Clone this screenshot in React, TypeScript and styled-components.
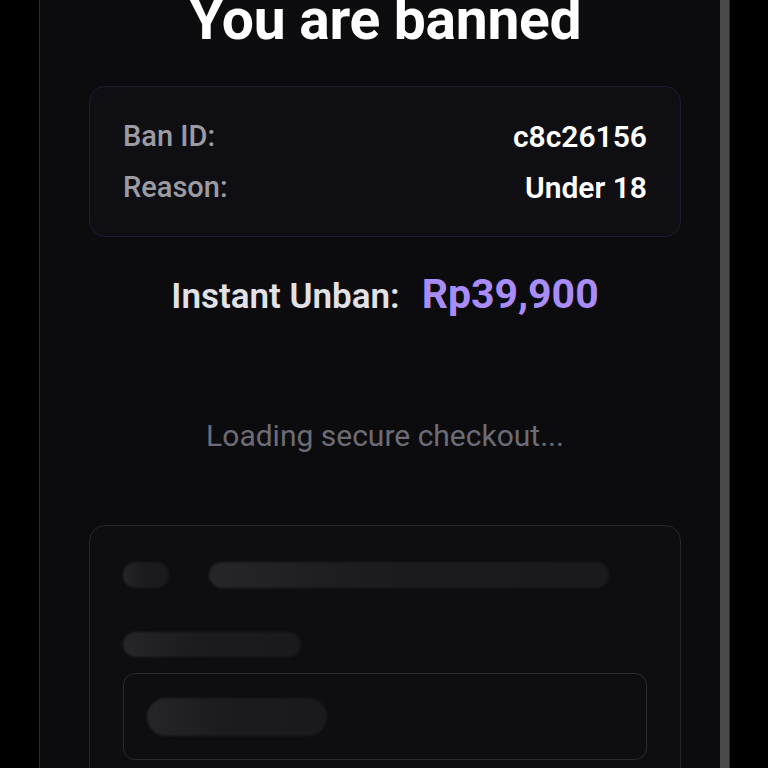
import React from "react";
import styled, { createGlobalStyle } from "styled-components";

const Global = createGlobalStyle`
  html, body { margin: 0; padding: 0; background: #000; }
  body { font-family: Roboto, "Liberation Sans", sans-serif; }
  * { box-sizing: border-box; }
`;

const Page = styled.div`
  width: 768px;
  height: 768px;
  overflow: hidden;
  background: #000;
  padding: 0 38px 0 39px;
`;

const Card = styled.div`
  margin-top: -40px;
  height: 900px;
  display: flex;
  background: #0c0c0f;
  border-left: 1px solid #2a2552;
  border-right: 1px solid #2a2552;
`;

const Content = styled.div`
  flex: 1;
  display: flex;
  flex-direction: column;
  padding: 34px 39px 0 49px;
`;

const ScrollTrack = styled.div`
  width: 9px;
  background: #4a4a4d;
`;

const Title = styled.h1`
  margin: 0;
  font-size: 57px;
  line-height: 52px;
  font-weight: 700;
  color: #fff;
  text-align: center;
  letter-spacing: -0.3px;
`;

const InfoBox = styled.div`
  margin-top: 40px;
  border: 1px solid #1e1b33;
  border-radius: 16px;
  background: #0f0f13;
  padding: 29px 33px;
  display: flex;
  flex-direction: column;
  gap: 11px;
`;

const InfoRow = styled.div`
  display: flex;
  justify-content: space-between;
  align-items: center;
  height: 40px;
`;

const Label = styled.span`
  color: #9b9ba4;
  font-size: 29px;
  font-weight: 500;
`;

const Value = styled.span`
  color: #fff;
  font-size: 30px;
  font-weight: 600;
`;

const PriceLine = styled.div`
  margin-top: 35px;
  display: flex;
  justify-content: center;
  align-items: baseline;
  gap: 22px;
  line-height: 44px;
`;

const PriceLabel = styled.span`
  font-size: 35px;
  font-weight: 600;
  color: #e2e2e6;
`;

const Price = styled.span`
  font-size: 41px;
  font-weight: 700;
  color: #a98cf8;
`;

const Loading = styled.div`
  margin-top: 99px;
  text-align: center;
  font-size: 30px;
  line-height: 36px;
  color: #6c6c76;
`;

const SkeletonCard = styled.div`
  margin-top: 71px;
  border: 1px solid #26262b;
  border-radius: 16px;
  background: #0e0e11;
  padding: 36px 33px;
  display: flex;
  flex-direction: column;
`;

const SkelRow = styled.div`
  display: flex;
  gap: 40px;
`;

const Bar = styled.div<{ $w: number; $h: number }>`
  width: ${(p) => p.$w}px;
  height: ${(p) => p.$h}px;
  border-radius: ${(p) => p.$h / 2}px;
  background: linear-gradient(90deg, #262629 0%, #1c1c20 40%, #1a1a1e 100%);
  filter: blur(1px);
`;

const FieldBox = styled.div`
  margin-top: 16px;
  height: 87px;
  border: 1px solid #2a2a30;
  border-radius: 12px;
  display: flex;
  align-items: center;
  padding: 0 23px;
`;

export default function App() {
  return (
    <>
      <Global />
      <Page>
        <Card>
          <Content>
            <Title>You are banned</Title>
            <InfoBox>
              <InfoRow>
                <Label>Ban ID:</Label>
                <Value>c8c26156</Value>
              </InfoRow>
              <InfoRow>
                <Label>Reason:</Label>
                <Value>Under 18</Value>
              </InfoRow>
            </InfoBox>
            <PriceLine>
              <PriceLabel>Instant Unban:</PriceLabel>
              <Price>Rp39,900</Price>
            </PriceLine>
            <Loading>Loading secure checkout...</Loading>
            <SkeletonCard>
              <SkelRow>
                <Bar $w={46} $h={26} />
                <Bar $w={400} $h={26} />
              </SkelRow>
              <Bar $w={178} $h={25} style={{ marginTop: 44 }} />
              <FieldBox>
                <Bar $w={180} $h={38} />
              </FieldBox>
            </SkeletonCard>
          </Content>
          <ScrollTrack />
        </Card>
      </Page>
    </>
  );
}
